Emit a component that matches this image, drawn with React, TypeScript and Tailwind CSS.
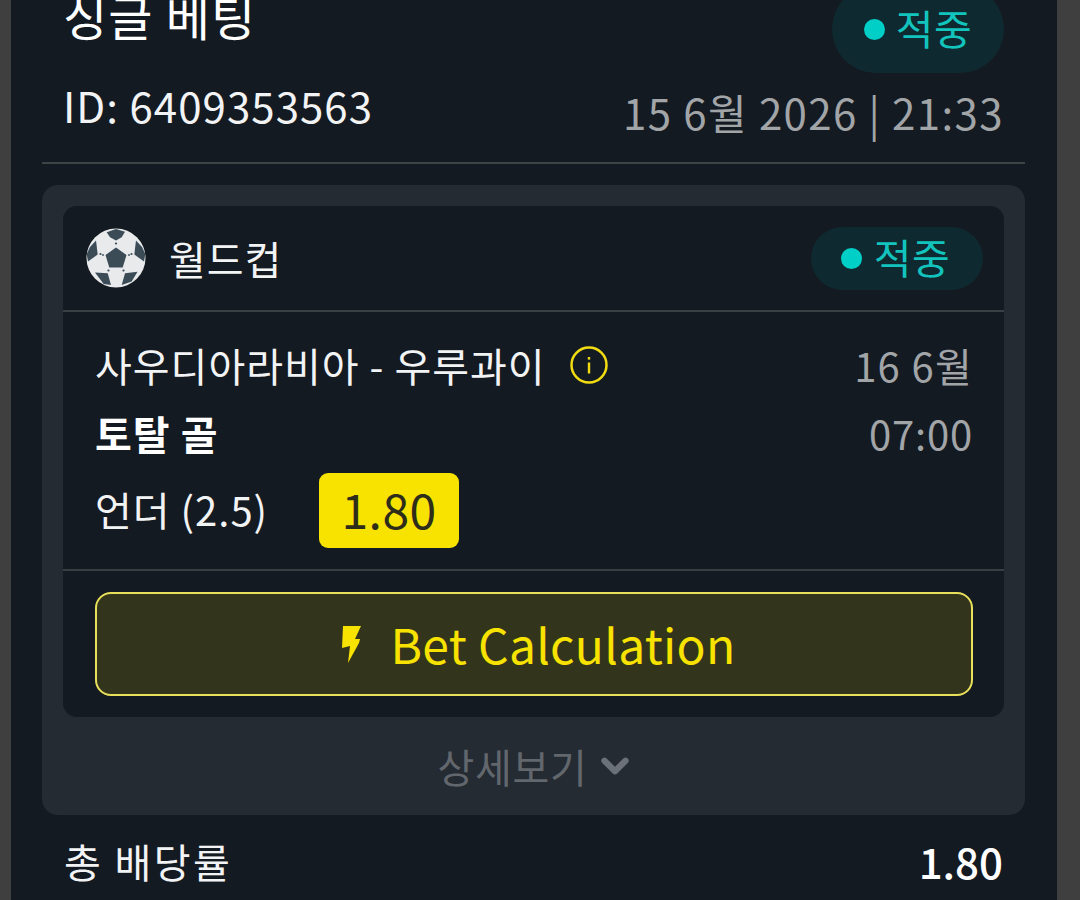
import React from "react";
import { ChevronDown } from "lucide-react";

function StatusPill({ tall }: { tall?: boolean }) {
  return (
    <div
      className={
        tall
          ? "flex items-center justify-center gap-[11px] w-[172px] h-[88px] rounded-full bg-[#0e2a30] text-[41px] leading-none tracking-[0.5px] text-[#12c4bd]"
          : "flex items-center justify-center gap-[12px] w-[172px] h-[63px] pr-[3px] rounded-full bg-[#0e2a30] text-[41px] leading-none tracking-[0.5px] text-[#12c4bd]"
      }
    >
      <span className="w-[21px] h-[21px] rounded-full bg-[#00cfc8]" />
      <span className="pb-[3px]">적중</span>
    </div>
  );
}

function SoccerBall() {
  return (
    <svg width="60" height="60" viewBox="0 0 60 60">
      <circle cx="30" cy="30" r="29.5" fill="#e8eaec" />
      <g fill="#3b4c57">
        <path d="M30 19.5 L40.5 27 L36.7 39.5 L23.3 39.5 L19.5 27 Z" />
        <path d="M20.7 4.3 L30 1 L39 3.7 L35.7 9.3 L30 12.5 L24 9.3 Z" />
        <path d="M50 12.5 L56 19 L59.3 26 L58 33.5 L48.3 26.5 Z" />
        <path d="M10 12.5 L4 19 L0.7 26 L2 33.5 L11.7 26.5 Z" />
        <path d="M9 44.5 L21.7 45.3 L25 57 L17.7 56 Z" />
        <path d="M39 45.3 L51.5 43.7 L45.7 53.5 L35.7 57 Z" />
      </g>
      <g fill="#3b4c57">
        <circle cx="30" cy="15.5" r="1.1" />
        <circle cx="14.5" cy="26" r="1.1" />
        <circle cx="17" cy="27" r="0.9" />
        <circle cx="45.5" cy="26" r="1.1" />
        <circle cx="43" cy="27" r="0.9" />
        <circle cx="22.5" cy="42.5" r="1.1" />
        <circle cx="37.5" cy="42.5" r="1.1" />
      </g>
    </svg>
  );
}

function Bolt() {
  return (
    <svg width="20" height="37" viewBox="0 0 20 37">
      <path d="M2 0 L20 0 L14 13 L19 13 L18 17 L7 37 L9 20 L1 22 Z" fill="#f7e200" />
    </svg>
  );
}

function InfoIcon() {
  return (
    <svg width="38" height="38" viewBox="0 0 38 38" fill="none">
      <circle cx="19" cy="19" r="17.5" stroke="#f0dc10" strokeWidth="2.5" />
      <rect x="17.8" y="16.5" width="2.4" height="11" fill="#f0dc10" />
      <rect x="17.8" y="11" width="2.4" height="2.6" fill="#f0dc10" />
    </svg>
  );
}

export default function App() {
  return (
    <div
      className="w-[1080px] h-[900px] overflow-hidden bg-[#3f3f3f] pl-[11px]"
      style={{ fontFamily: '"Noto Sans CJK KR", "Noto Sans", sans-serif' }}
    >
      <div className="w-[1046px] h-[900px] overflow-hidden bg-[#141a21] pl-[31px] pr-[32px] flex flex-col">
        <div className="mt-[-40px] h-[204px] shrink-0 border-b-2 border-[#3f4346] pl-[21px] pr-[21px] flex justify-between">
          <div className="flex flex-col">
            <div className="mt-[25px] h-[60px] text-[48px] leading-[60px] tracking-[1.2px] text-white">싱글 베팅</div>
            <div className="mt-[30px] text-[42px] leading-[60px] tracking-[1.05px] text-[#f2f3f4]">ID: 6409353563</div>
          </div>
          <div className="flex flex-col items-end">
            <div className="mt-[25px]">
              <StatusPill tall />
            </div>
            <div className="mt-[9px] text-[42px] leading-[60px] tracking-[1.4px] text-[#a2a5a8]">15 6월 2026 | 21:33</div>
          </div>
        </div>

        <div className="mt-[21px] h-[630px] shrink-0 rounded-[16px] bg-[#252b33] px-[21px] pt-[21px] flex flex-col">
          <div className="h-[511px] rounded-[14px] bg-[#141a21] flex flex-col">
            <div className="h-[106px] shrink-0 border-b-2 border-[#3a3f44] pl-[23px] pr-[21px] flex items-center justify-between">
              <div className="flex items-center gap-[23px]">
                <SoccerBall />
                <span className="text-[40px] leading-none tracking-[1px] text-[#f2f3f4]">월드컵</span>
              </div>
              <StatusPill />
            </div>

            <div className="h-[259px] shrink-0 border-b-2 border-[#3a3f44] pl-[32px] pr-[31px] pt-[18px]">
              <div className="flex justify-between items-center h-[70px]">
                <div className="flex items-center gap-[24px]">
                  <span className="text-[40px] leading-none tracking-[1px] text-[#f2f3f4]">사우디아라비아 - 우루과이</span>
                  <InfoIcon />
                </div>
                <span className="text-[40px] leading-none tracking-[1.3px] text-[#a2a5a8]">16 6월</span>
              </div>
              <div className="flex justify-between items-center h-[65px]">
                <span className="text-[40px] leading-none font-bold tracking-[1px] text-white">토탈 골</span>
                <span className="text-[40px] leading-none tracking-[0.8px] text-[#a2a5a8]">07:00</span>
              </div>
              <div className="mt-[8px] flex items-center gap-[51px]">
                <span className="pb-[4px] text-[40px] leading-none tracking-[1px] text-[#f2f3f4]">언더 (2.5)</span>
                <span className="w-[140px] h-[75px] pb-[5px] rounded-[9px] bg-[#f7e200] flex items-center justify-center text-[48px] leading-none tracking-[0.5px] text-[#2d2d1a]">1.80</span>
              </div>
            </div>

            <div className="pl-[32px] pr-[31px] pt-[21px]">
              <div className="h-[104px] pl-[8px] rounded-[16px] border-2 border-[#e8e05a] bg-[#33341c] flex items-center justify-center gap-[30px]">
                <Bolt />
                <span className="pb-[2px] text-[48px] leading-none tracking-[0.27px] text-[#f7e200]">Bet Calculation</span>
              </div>
            </div>
          </div>

          <div className="flex-1 pl-[6px] flex items-center justify-center gap-[6px] text-[40px] leading-none tracking-[0.7px] text-[#62676d]">
            <span>상세보기</span>
            <ChevronDown size={42} strokeWidth={3.6} className="text-[#6c7177]" />
          </div>
        </div>

        <div className="mt-[18px] pl-[22px] pr-[22px] flex justify-between items-center h-[56px] shrink-0">
          <span className="text-[40px] leading-none tracking-[2.4px] text-[#f2f3f4]">총 배당률</span>
          <span className="text-[42px] leading-none font-medium text-white">1.80</span>
        </div>
      </div>
    </div>
  );
}
